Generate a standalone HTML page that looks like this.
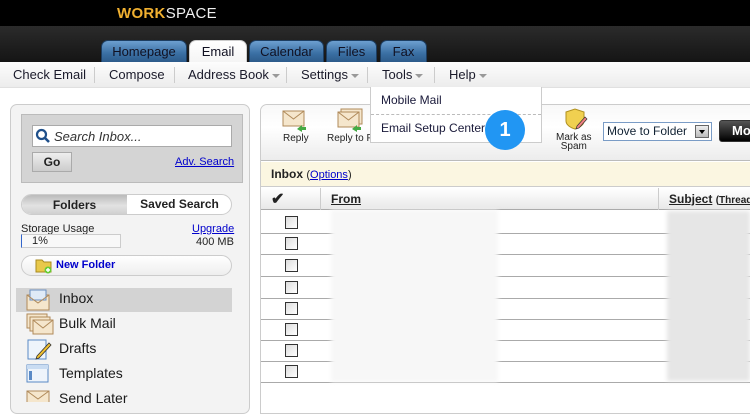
<!DOCTYPE html>
<html><head><meta charset="utf-8"><style>
*{box-sizing:border-box;margin:0;padding:0}
body{width:750px;height:400px;overflow:hidden;background:#fff;font-family:"Liberation Sans",Arial,sans-serif;position:relative;font-size:12px;color:#222}
.a{position:absolute;white-space:nowrap}
.tab{position:absolute;top:40px;height:22px;border-radius:7px 7px 0 0;background:linear-gradient(#6d9fd0,#3a6fa3 60%,#2d5b8a);border:1px solid #1d3e62;border-bottom:none;color:#112;font-size:13px;text-align:center;line-height:21px}
.mi{position:absolute;top:67px;font-size:13px;color:#1a1a2a;white-space:nowrap}
.sep{position:absolute;top:67px;width:1px;height:16px;background:#ccc}
.caret{display:inline-block;width:0;height:0;border-left:4px solid transparent;border-right:4px solid transparent;border-top:4px solid #999;vertical-align:middle;margin-left:3px}
.fl{position:absolute;left:59px;font-size:14px;color:#1a1a1a}
.cb{position:absolute;left:285px;width:13px;height:13px;border:1px solid #333;background:linear-gradient(135deg,#ddd,#fff)}
.hl{position:absolute;left:261px;height:1px;background:#aaa}
a{color:#00c;text-decoration:underline}
</style></head><body>
<div class="a" style="left:0;top:0;width:750px;height:26px;background:#000"></div>
<div class="a" style="left:117px;top:5px;font-size:15px;font-weight:bold;letter-spacing:0.3px;color:#f0f0f0"><span style="color:#f0b030">WORK</span><span style="font-weight:normal">SPACE</span></div>
<div class="a" style="left:0;top:26px;width:750px;height:36px;background:linear-gradient(#2b2b2b,#151515)"></div>
<div class="tab" style="left:101px;width:86px">Homepage</div>
<div class="tab" style="left:189px;width:58px;background:linear-gradient(#fff,#f4f4f4);border-color:#ccc;height:23px">Email</div>
<div class="tab" style="left:249px;width:75px">Calendar</div>
<div class="tab" style="left:326px;width:51px">Files</div>
<div class="tab" style="left:380px;width:47px">Fax</div>
<div class="a" style="left:0;top:62px;width:750px;height:26px;background:linear-gradient(#fdfdfd,#ececec);border-bottom:1px solid #e0e0e0"></div>
<div class="mi" style="left:13px">Check Email</div><div class="sep" style="left:94px"></div>
<div class="mi" style="left:109px">Compose</div><div class="sep" style="left:174px"></div>
<div class="mi" style="left:188px">Address Book<span class="caret"></span></div><div class="sep" style="left:286px"></div>
<div class="mi" style="left:301px">Settings<span class="caret"></span></div><div class="sep" style="left:367px"></div>
<div class="mi" style="left:382px">Tools<span class="caret"></span></div><div class="sep" style="left:434px"></div>
<div class="mi" style="left:449px">Help<span class="caret"></span></div>

<div class="a" style="left:10px;top:104px;width:240px;height:310px;background:#f3f3f3;border:1px solid #ccc;border-radius:7px"></div>
<div class="a" style="left:21px;top:114px;width:222px;height:69px;background:#d4d4d4;border:1px solid #bbb"></div>
<div class="a" style="left:32px;top:125px;width:200px;height:22px;background:#fff;border:1px solid #aaa"></div>
<svg class="a" style="left:35px;top:128px" width="16" height="16"><circle cx="6.5" cy="6.5" r="4.5" fill="none" stroke="#1e4f8a" stroke-width="2.2"/><line x1="10" y1="10" x2="14" y2="14" stroke="#1e4f8a" stroke-width="2.6"/></svg>
<div class="a" style="left:54px;top:129px;font-size:13px;font-style:italic;color:#333">Search Inbox...</div>
<div class="a" style="left:32px;top:152px;width:40px;height:20px;background:linear-gradient(#eee,#ccc);border:1px solid #aaa;font-weight:bold;font-size:12px;text-align:center;line-height:18px">Go</div>
<div class="a" style="left:175px;top:156px;font-size:11px"><a>Adv. Search</a></div>
<div class="a" style="left:21px;top:194px;width:211px;height:21px;border:1px solid #ccc;border-radius:11px;background:#fff;overflow:hidden">
<div class="a" style="left:0;top:0;width:105px;height:21px;background:linear-gradient(#bbb,#e2e2e2 50%,#ccc);font-weight:bold;font-size:12px;text-align:center;line-height:20px">Folders</div>
<div class="a" style="left:105px;top:0;width:105px;font-weight:bold;font-size:12px;text-align:center;line-height:19px">Saved Search</div></div>
<div class="a" style="left:21px;top:223px;font-size:11px">Storage Usage</div>
<div class="a" style="left:21px;top:234px;width:100px;height:14px;border:1px solid #ccc;border-left:1px solid #36c;background:#f8f8f8;font-size:11px;padding-left:10px;line-height:12px">1%</div>
<div class="a" style="left:192px;top:223px;font-size:11px"><a>Upgrade</a></div>
<div class="a" style="left:196px;top:236px;font-size:11px">400 MB</div>
<div class="a" style="left:21px;top:255px;width:211px;height:21px;border:1px solid #ccc;border-radius:11px;background:linear-gradient(#fff,#eee)"></div>
<svg class="a" style="left:35px;top:257px" width="18" height="17"><path d="M1 3h6l2 2h7v10H1z" fill="#e8c84a" stroke="#a88a20"/><circle cx="13" cy="13" r="3.5" fill="#6c3"/><path d="M11 13h4M13 11v4" stroke="#fff" stroke-width="1.4"/></svg>
<div class="a" style="left:56px;top:259px;font-size:11px;font-weight:bold;color:#00c">New Folder</div>
<div class="a" style="left:16px;top:288px;width:216px;height:24px;background:#d3d3d3"></div>
<svg class="a" style="left:26px;top:289px" width="24" height="22"><rect x="1" y="6" width="22" height="15" fill="#f5e6cc" stroke="#b08a5a"/><rect x="4" y="1" width="16" height="10" fill="#dfeaf7" stroke="#6a8ebf"/><path d="M1 6l11 8 11-8" fill="none" stroke="#b08a5a"/></svg>
<div class="fl" style="top:290px">Inbox</div>
<svg class="a" style="left:26px;top:313px" width="28" height="22"><rect x="1" y="1" width="20" height="14" fill="#f5e6cc" stroke="#b08a5a"/><rect x="4" y="4" width="20" height="14" fill="#f5e6cc" stroke="#b08a5a"/><rect x="7" y="7" width="20" height="14" fill="#f5e6cc" stroke="#b08a5a"/><path d="M7 7l10 8 10-8" fill="none" stroke="#b08a5a"/></svg>
<div class="fl" style="top:315px">Bulk Mail</div>
<svg class="a" style="left:27px;top:338px" width="26" height="22"><rect x="1" y="2" width="18" height="19" fill="#eef4fb" stroke="#5a8ac6"/><path d="M10 18l12-13 2 2-12 13-3 1z" fill="#f0c030" stroke="#333" stroke-width=".8"/></svg>
<div class="fl" style="top:340px">Drafts</div>
<svg class="a" style="left:26px;top:364px" width="24" height="20"><rect x="1" y="1" width="21" height="17" fill="#eef4fb" stroke="#5a8ac6"/><rect x="1" y="1" width="21" height="4" fill="#c9dcf2"/><rect x="3" y="7" width="3" height="9" fill="#5a8ac6"/></svg>
<div class="fl" style="top:365px">Templates</div>
<svg class="a" style="left:26px;top:390px" width="24" height="12"><rect x="1" y="1" width="22" height="14" fill="#f5e6cc" stroke="#b08a5a"/><path d="M1 1l11 8 11-8" fill="none" stroke="#b08a5a"/></svg>
<div class="fl" style="top:390px">Send Later</div>

<div class="a" style="left:260px;top:104px;width:500px;height:310px;border:1px solid #ccc;border-radius:7px 0 0 0;background:#fff"></div>
<div class="a" style="left:261px;top:105px;width:489px;height:56px;background:linear-gradient(#f8f8f8,#fff 40%,#ececec);border-bottom:1px solid #bbb;border-radius:7px 0 0 0"></div>
<svg class="a" style="left:282px;top:110px" width="26" height="22"><rect x="1" y="1" width="21" height="15" fill="#f5e6cc" stroke="#b08a5a"/><path d="M1 1l10.5 8 10.5-8" fill="none" stroke="#b08a5a"/><path d="M15 19l5-4v2h4v3h-4v2z" fill="#4a4"/></svg>
<div class="a" style="left:283px;top:133px;font-size:10px">Reply</div>
<svg class="a" style="left:337px;top:108px" width="30" height="24"><rect x="4" y="1" width="21" height="15" fill="#f5e6cc" stroke="#b08a5a"/><rect x="1" y="4" width="21" height="15" fill="#f5e6cc" stroke="#b08a5a"/><path d="M1 4l10.5 8 10.5-8" fill="none" stroke="#b08a5a"/><path d="M15 21l5-4v2h4v3h-4v2z" fill="#4a4"/></svg>
<div class="a" style="left:327px;top:133px;font-size:10px">Reply to F</div>
<svg class="a" style="left:564px;top:108px" width="24" height="22"><path d="M2 4l9-3 9 3v9c0 4-5 7-9 8-4-1-9-4-9-8z" fill="#f0d050" stroke="#b09020"/><path d="M13 18l8-9 2 2-8 9-3 1z" fill="#f08080" stroke="#333" stroke-width=".7"/></svg>
<div class="a" style="left:556px;top:133px;font-size:10px;text-align:center;line-height:9px">Mark as<br>Spam</div>
<div class="a" style="left:603px;top:122px;width:109px;height:19px;border:1px solid #7a9cc6;background:#fff;font-size:12px;padding-left:3px;line-height:17px;color:#123">Move to Folder</div>
<div class="a" style="left:695px;top:125px;width:14px;height:13px;background:linear-gradient(#eee,#bbb);border:1px solid #666"><div class="a" style="left:3px;top:4px;border-left:3px solid transparent;border-right:3px solid transparent;border-top:4px solid #000"></div></div>
<div class="a" style="left:719px;top:120px;width:40px;height:22px;background:linear-gradient(#555,#000);border-radius:3px;border:1px solid #333;color:#fff;font-weight:bold;font-size:13px;padding-left:12px;line-height:20px">Mo</div>
<div class="a" style="left:261px;top:162px;width:489px;height:25px;background:#fbf6e1;border-bottom:1px solid #ccc"></div>
<div class="a" style="left:271px;top:167px;font-size:12px;font-weight:bold">Inbox <span style="font-weight:normal;font-size:11px">(<a>Options</a>)</span></div>
<div class="a" style="left:261px;top:188px;width:489px;height:22px;background:linear-gradient(#fff,#e8e8e8);border-bottom:1px solid #aaa"></div>
<div class="a" style="left:320px;top:188px;width:1px;height:22px;background:#ccc"></div>
<div class="a" style="left:658px;top:188px;width:1px;height:22px;background:#ccc"></div>
<div class="a" style="left:271px;top:189px;font-size:16px;font-weight:bold">✔</div>
<div class="a" style="left:331px;top:192px;font-size:12px;font-weight:bold;text-decoration:underline">From</div>
<div class="a" style="left:669px;top:192px;font-size:12px;font-weight:bold"><u>Subject</u> <span style="font-size:10px">(<u>Thread</u></span></div>
<div class="hl" style="top:233px;width:489px"></div><div class="hl" style="top:254px;width:489px"></div><div class="hl" style="top:276px;width:489px"></div><div class="hl" style="top:298px;width:489px"></div><div class="hl" style="top:319px;width:489px"></div><div class="hl" style="top:340px;width:489px"></div><div class="hl" style="top:361px;width:489px"></div><div class="hl" style="top:382px;width:489px"></div>
<div class="a" style="left:331px;top:210px;width:167px;height:172px;background:#f7f7f7;filter:blur(2px)"></div>
<div class="a" style="left:667px;top:211px;width:83px;height:170px;background:#e6e6e6;filter:blur(2px)"></div>
<div class="cb" style="top:216px"></div><div class="cb" style="top:237px"></div><div class="cb" style="top:259px"></div><div class="cb" style="top:281px"></div><div class="cb" style="top:302px"></div><div class="cb" style="top:323px"></div><div class="cb" style="top:344px"></div><div class="cb" style="top:365px"></div>

<div class="a" style="left:370px;top:87px;width:172px;height:56px;background:#fff;border:1px solid #ccc;border-top:none"></div>
<div class="a" style="left:381px;top:93px;font-size:12px;color:#1a1a3a">Mobile Mail</div>
<div class="a" style="left:371px;top:114px;width:170px;border-top:1px dashed #bbb"></div>
<div class="a" style="left:381px;top:121px;font-size:12px;color:#1a1a3a">Email Setup Center</div>
<div class="a" style="left:485px;top:110px;width:40px;height:40px;border-radius:50%;background:#2196f3;color:#fff;font-weight:bold;font-size:20px;text-align:center;line-height:40px">1</div>
</body></html>
